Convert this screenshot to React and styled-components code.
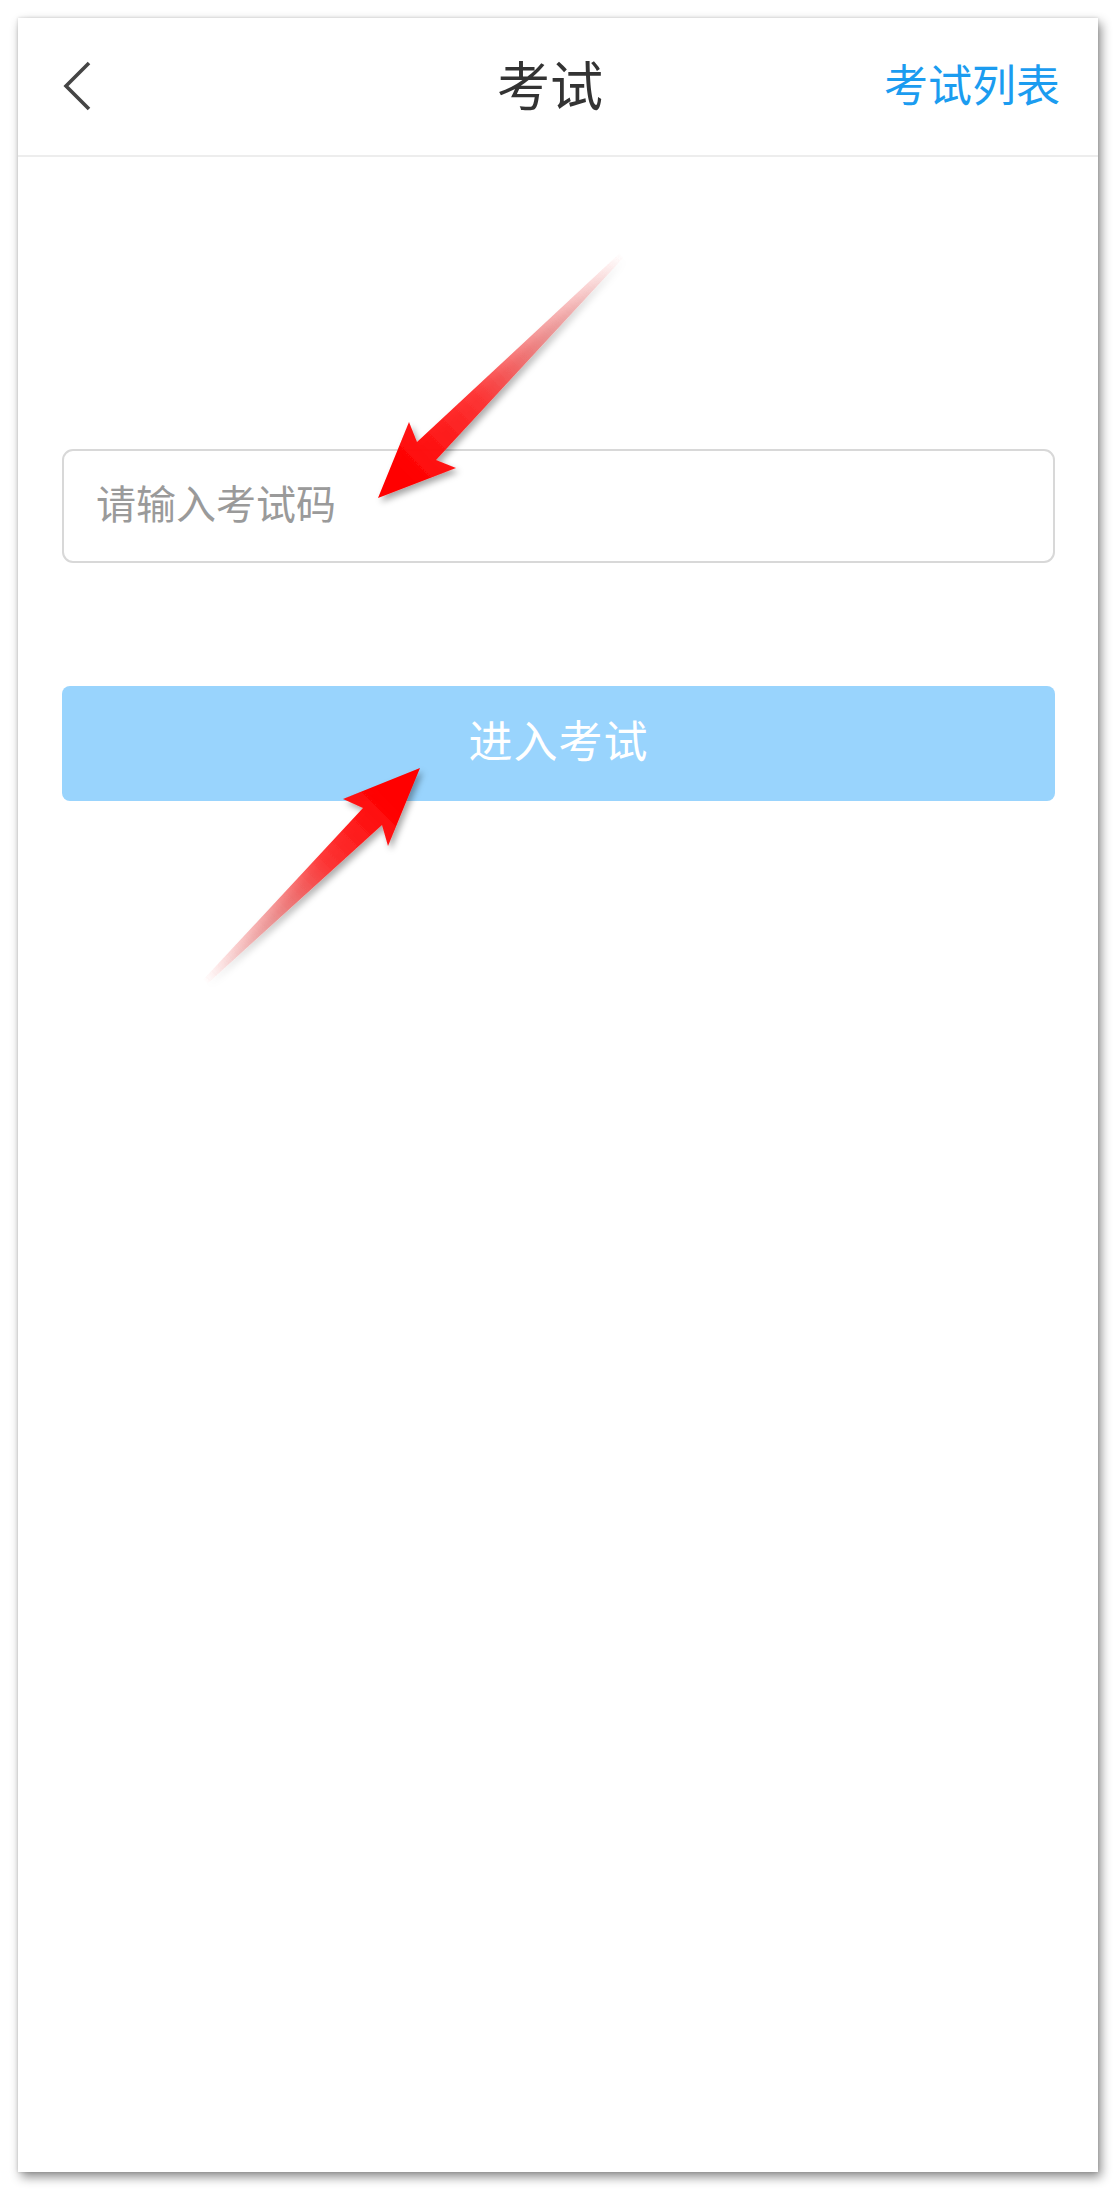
import React from "react";
import styled, { createGlobalStyle } from "styled-components";

const GlobalStyle = createGlobalStyle`
  html, body {
    margin: 0;
    padding: 0;
    background: #ffffff;
  }
  body {
    font-family: "Noto Sans CJK SC", "Noto Sans", sans-serif;
  }
  * { box-sizing: border-box; }
`;

const Page = styled.div`
  position: relative;
  width: 1116px;
  height: 2190px;
  padding: 18px;
  background: #ffffff;
`;

const Card = styled.div`
  width: 1080px;
  height: 2154px;
  background: #ffffff;
  box-shadow: 3px 5px 10px rgba(0, 0, 0, 0.45), 0 0 3px rgba(0, 0, 0, 0.15);
  display: flex;
  flex-direction: column;
`;

const Header = styled.header`
  position: relative;
  height: 139px;
  flex-shrink: 0;
  display: grid;
  grid-template-columns: 200px 1fr 200px;
  align-items: center;
  padding: 0 38px 0 44px;
  border-bottom: 2px solid #ededed;
`;

const BackButton = styled.button`
  width: 40px;
  height: 60px;
  padding: 0;
  border: none;
  background: transparent;
  display: flex;
  align-items: center;
  justify-content: flex-start;
  margin-top: -2px;
`;

const Title = styled.h1`
  margin: -6px 0 0 -22px;
  text-align: center;
  font-size: 53px;
  font-weight: 400;
  color: #333333;
  line-height: 1;
`;

const HeaderLink = styled.a`
  justify-self: end;
  font-size: 44px;
  line-height: 1;
  color: #1b9cf0;
  text-decoration: none;
  white-space: nowrap;
  margin-top: -8px;
`;

const Body = styled.main`
  display: flex;
  flex-direction: column;
  gap: 123px;
  padding: 292px 43px 0 44px;
`;

const CodeInput = styled.input`
  height: 114px;
  width: 100%;
  border: 2px solid #d8d8d8;
  border-radius: 11px;
  padding: 0 32px 8px;
  font-family: "Noto Sans CJK SC", "Noto Sans", sans-serif;
  font-size: 40px;
  color: #333;
  outline: none;
  background: #ffffff;
  &::placeholder {
    color: #9a9a9a;
  }
`;

const SubmitButton = styled.button`
  height: 115px;
  width: 100%;
  border: none;
  border-radius: 8px;
  background: #99d4fd;
  color: #ffffff;
  font-family: "Noto Sans CJK SC", "Noto Sans", sans-serif;
  font-size: 44px;
  letter-spacing: 1px;
  padding: 0 0 10px;
  cursor: pointer;
`;

const Overlay = styled.svg`
  position: absolute;
  left: 0;
  top: 0;
  width: 1116px;
  height: 2190px;
  pointer-events: none;
`;

const ChevronLeft = () => (
  <svg width="34" height="52" viewBox="0 0 34 52">
    <polyline
      points="27,3 4,26 27,49"
      fill="none"
      stroke="#454545"
      strokeWidth="3.6"
      strokeLinecap="butt"
      strokeLinejoin="miter"
    />
  </svg>
);

const Arrow = ({ id, points, from, to }) => (
  <g filter="url(#arrowShadow)">
    <defs>
      <linearGradient
        id={id}
        gradientUnits="userSpaceOnUse"
        x1={from[0]}
        y1={from[1]}
        x2={to[0]}
        y2={to[1]}
      >
        <stop offset="0" stopColor="#f04a4a" stopOpacity="0" />
        <stop offset="0.35" stopColor="#ee5a5a" stopOpacity="0.55" />
        <stop offset="0.65" stopColor="#ff2a2a" stopOpacity="0.92" />
        <stop offset="1" stopColor="#ff0000" stopOpacity="1" />
      </linearGradient>
    </defs>
    <polygon points={points} fill={`url(#${id})`} />
  </g>
);

export default function App() {
  return (
    <>
      <GlobalStyle />
      <Page>
        <Card>
          <Header>
            <BackButton aria-label="返回">
              <ChevronLeft />
            </BackButton>
            <Title>考试</Title>
            <HeaderLink href="#">考试列表</HeaderLink>
          </Header>
          <Body>
            <CodeInput placeholder="请输入考试码" />
            <SubmitButton>进入考试</SubmitButton>
          </Body>
        </Card>
        <Overlay viewBox="0 0 1116 2190">
          <defs>
            <filter id="arrowShadow" x="-20%" y="-20%" width="140%" height="140%">
              <feDropShadow dx="3" dy="4" stdDeviation="3" floodColor="#000" floodOpacity="0.35" />
            </filter>
          </defs>
          <Arrow
            id="arrowGradA"
            from={[622, 255]}
            to={[400, 470]}
            points="620,253 624,257 436,460 456,468 378,498 409,422 417,442"
          />
          <Arrow
            id="arrowGradB"
            from={[205, 982]}
            to={[390, 800]}
            points="203,980 207,984 382,825 388,846 420,768 343,799 363,808"
          />
        </Overlay>
      </Page>
    </>
  );
}
